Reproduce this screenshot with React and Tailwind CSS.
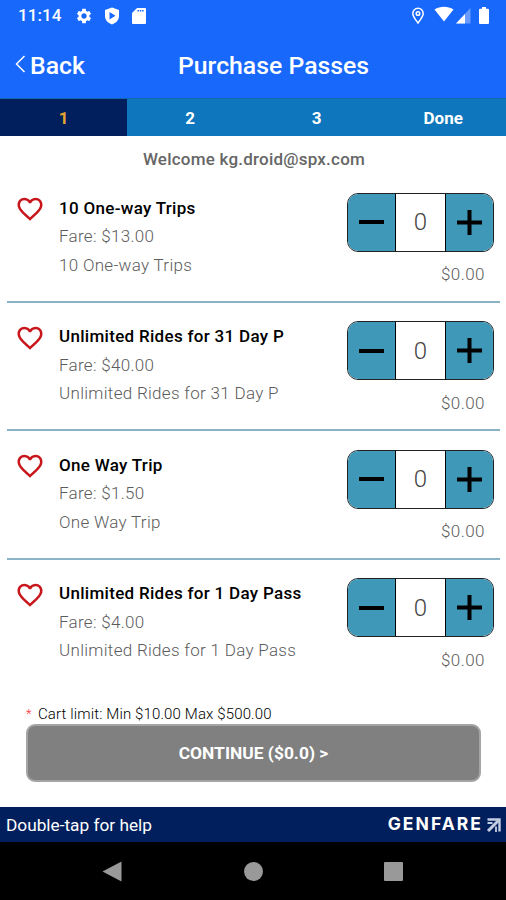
import { useState } from 'react';
import { MdSettings, MdFavoriteBorder } from 'react-icons/md';

const steps = ['1', '2', '3', 'Done'];

const passes = [
  { id: 1, name: '10 One-way Trips', fare: 13 },
  { id: 2, name: 'Unlimited Rides for 31 Day P', fare: 40 },
  { id: 3, name: 'One Way Trip', fare: 1.5 },
  { id: 4, name: 'Unlimited Rides for 1 Day Pass', fare: 4 },
];

function StatusBar() {
  return (
    <div className="flex h-8 items-center justify-between pl-[18px] pr-[17px] text-white">
      <div className="flex items-center">
        <span className="w-[57px] text-[17px] font-medium tracking-[0.1px]">11:14</span>
        <MdSettings size={18} />
        <svg className="ml-[11px]" width="16" height="18" viewBox="0 0 16 18" fill="currentColor" fillRule="evenodd">
          <path d="M8 .5 15 3v6c0 4-2.800 7-7 8.500C3.800 16 1 13 1 9V3zM5.500 5v7.500L11.500 8.700z" />
        </svg>
        <svg className="ml-[12px]" width="14" height="16" viewBox="0 0 14 16" fill="currentColor">
          <path d="M5 0h8a1 1 0 0 1 1 1v14a1 1 0 0 1-1 1H1a1 1 0 0 1-1-1V5z" />
          <path d="M5.500 2.800h6.500" stroke="#1968fc" strokeWidth="1.600" strokeDasharray="1.500 .8" />
        </svg>
      </div>
      <div className="flex items-center">
        <svg width="14" height="18" viewBox="0 0 14 18" fill="none" stroke="currentColor" strokeWidth="1.500">
          <path d="M7 16C4 12 1.800 9.500 1.800 6.500a5.200 5.200 0 0 1 10.400 0C12.200 9.500 10 12 7 16z" />
          <circle cx="7" cy="6.500" r="1.800" />
        </svg>
        <svg className="ml-[9px] -mt-1" width="20" height="16" viewBox="0 0 20 16" fill="currentColor">
          <path d="M.5 3.500C6-.3 14-.3 19.500 3.500L10 15.500z" />
        </svg>
        <svg className="ml-[2px] -mt-px" width="15" height="16" viewBox="0 0 15 16" fill="currentColor">
          <path d="M0 15.500 14.500 0v15.500z" opacity=".35" />
          <path d="M0 15.500 9 6v9.500z" />
        </svg>
        <svg className="ml-[8px] -mt-[2px]" width="10" height="17" viewBox="0 0 10 17" fill="currentColor">
          <path d="M3 0h4v1.800h2a1 1 0 0 1 1 1V16a1 1 0 0 1-1 1H1a1 1 0 0 1-1-1V2.800a1 1 0 0 1 1-1h2z" />
        </svg>
      </div>
    </div>
  );
}

function Header() {
  return (
    <header className="h-[98px] bg-[#1968fc]">
      <StatusBar />
      <div className="grid h-[67px] grid-cols-[178px_1fr] items-center text-[24.800px] font-medium text-white">
        <button className="flex items-center pl-[15px]">
          <svg className="mr-[4px] -mt-1" width="11" height="18" viewBox="0 0 11 18" fill="none" stroke="currentColor" strokeWidth="1.500">
            <path d="M9.500 1 1.500 9l8 8" />
          </svg>
          Back
        </button>
        <h1 className="whitespace-nowrap">Purchase Passes</h1>
      </div>
    </header>
  );
}

function Stepper({ value, onChange }) {
  return (
    <div className="grid h-[59px] w-[147px] grid-cols-[48px_1fr_48px] overflow-hidden rounded-[11px] border border-[#222] bg-white">
      <button
        className="flex items-center justify-center border-r border-black bg-[#3f98b7]"
        onClick={() => onChange(Math.max(0, value - 1))}
      >
        <span className="h-1 w-[25px] bg-black" />
      </button>
      <span className="flex items-center justify-center text-2xl font-light text-[#444]">{value}</span>
      <button
        className="flex items-center justify-center border-l border-black bg-[#3f98b7]"
        onClick={() => onChange(value + 1)}
      >
        <svg width="25" height="25" viewBox="0 0 25 25" stroke="#000" strokeWidth="4">
          <path d="M0 12.500h25M12.500 0v25" />
        </svg>
      </button>
    </div>
  );
}

function PassRow({ pass, qty, onChange, last }) {
  return (
    <li className={`ml-[7px] mr-[6px] flex h-[128.500px] justify-between border-b-2 ${last ? 'border-transparent' : 'border-[#8bb3c8]'}`}>
      <div className="flex">
        <MdFavoriteBorder className="ml-[8px] mt-[20px] text-[#c8161d]" size={30} />
        <div className="ml-[14px] mt-[19.500px] whitespace-nowrap text-[17px] leading-[28.500px] text-[#5c5c5c]">
          <h2 className="font-medium tracking-[0.300px] text-black">{pass.name}</h2>
          <p className="font-light tracking-[0.300px]">Fare: ${pass.fare.toFixed(2)}</p>
          <p className="font-light tracking-[0.300px]">{pass.name}</p>
        </div>
      </div>
      <div className="mr-[6px] mt-[18.500px] flex flex-col items-end">
        <Stepper value={qty} onChange={onChange} />
        <span className="mr-[9px] mt-[9.500px] text-[17px] leading-[26px] font-light tracking-[0.450px] text-[#5c5c5c]">
          ${(qty * pass.fare).toFixed(2)}
        </span>
      </div>
    </li>
  );
}

function Footer() {
  return (
    <footer>
      <div className="flex h-[35px] items-center justify-between bg-[#001f5c] pl-[6px] pr-[5px] text-white">
        <span className="pt-[2px] text-[17.250px]">Double-tap for help</span>
        <div className="flex items-center">
          <span className="font-['Inter',sans-serif] text-[17.500px] font-bold tracking-[2.050px]">GENFARE</span>
          <svg className="ml-[3px]" width="15" height="14" viewBox="0 0 15 14" fill="none" stroke="#c3cee2">
            <path d="M1.500 1.500H13.500V13.500" strokeWidth="2.400" />
            <path d="M12.500 2.500 2 13" strokeWidth="3" />
            <path d="M1.500 5h5M10 8.500V14" strokeWidth="1.800" />
          </svg>
        </div>
      </div>
      <div className="flex h-[58px] items-center justify-between bg-black pl-[102px] pr-[103px]">
        <svg width="20" height="21" viewBox="0 0 20 21" fill="#999">
          <path d="M19.500.5v20L.5 10.500z" />
        </svg>
        <span className="size-[19px] rounded-full bg-[#999]" />
        <span className="size-[19px] rounded-[1px] bg-[#999]" />
      </div>
    </footer>
  );
}

export default function App() {
  const [cart, setCart] = useState({});

  const total = passes.reduce((sum, p) => sum + p.fare * (cart[p.id] || 0), 0);

  return (
    <div className="flex h-[900px] w-[506px] flex-col overflow-hidden bg-white font-['Roboto',sans-serif]">
      <Header />

      {/* Steps */}
      <ol className="grid h-[38px] grid-cols-4 border-t border-[#1268ac] bg-[#0e76bc] text-[17px] font-bold text-white">
        {steps.map((step, i) => (
          <li key={step} className={`flex items-center justify-center pl-px pt-[2px] ${i === 0 ? 'bg-[#001f5c] text-[#e5a52f]' : ''}`}>
            {step}
          </li>
        ))}
      </ol>

      <p className="pt-[11px] pl-[2px] text-center text-[17px] leading-[25px] font-medium tracking-[0.220px] text-[#666]">
        Welcome kg.droid@spx.com
      </p>

      <ul className="h-[532px] pt-[2px]">
        {passes.map((pass, i) => (
          <PassRow
            key={pass.id}
            pass={pass}
            qty={cart[pass.id] || 0}
            onChange={(n) => setCart({ ...cart, [pass.id]: n })}
            last={i === passes.length - 1}
          />
        ))}
      </ul>

      {/* Checkout */}
      <div className="flex flex-1 flex-col px-[26px]">
        <p className="flex h-5 items-center text-[15px] font-light tracking-[0.130px] text-black">
          <span className="w-3 text-[13px] text-red-500">*</span>
          Cart limit: Min $10.00 Max $500.00
        </p>
        <button className="mr-[-1px] h-[58px] rounded-[9px] border-2 border-[#a5a5a5] bg-[#808080] pt-px text-[17.400px] font-bold text-white">
          CONTINUE (${total.toFixed(1)}) &gt;
        </button>
      </div>

      <Footer />
    </div>
  );
}
